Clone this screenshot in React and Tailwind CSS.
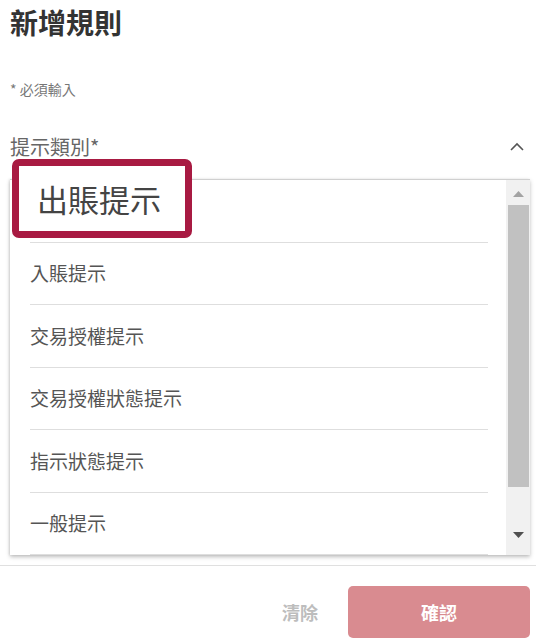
const OPTIONS = ['出賬提示', '入賬提示', '交易授權提示', '交易授權狀態提示', '指示狀態提示', '一般提示']

function ChevronUp() {
  return (
    <svg width="16" height="10" viewBox="0 0 16 10" aria-hidden>
      <path d="M2 8 L8 2 L14 8" fill="none" stroke="#555" strokeWidth="1.6" />
    </svg>
  )
}

function ScrollArrow({ down = false, color }) {
  return (
    <svg width="11" height="6" viewBox="0 0 11 6" aria-hidden>
      <path d={down ? 'M0 0 L11 0 L5.5 6 Z' : 'M0 6 L11 6 L5.5 0 Z'} fill={color} />
    </svg>
  )
}

export default function App() {
  return (
    <div
      className="relative w-[536px] h-[644px] bg-white overflow-hidden flex flex-col"
      style={{ fontFamily: '"Noto Sans CJK TC", "Noto Sans", sans-serif' }}
    >
      {/* Header */}
      <div className="h-[44px] pl-[10px] flex items-center">
        <h1 className="text-[28px] font-bold text-[#333] leading-none">新增規則</h1>
      </div>
      <div className="mt-[38px] h-[14px] pl-[10px] flex items-center text-[14px] text-[#777] leading-none">
        * 必須輸入
      </div>

      {/* Field label */}
      <div className="mt-[40px] h-[22px] pl-[10px] pr-[11px] flex items-center justify-between">
        <span className="text-[20px] text-[#666] leading-none">提示類別*</span>
        <ChevronUp />
      </div>

      <div className="flex-1" />

      {/* Footer */}
      <div className="h-[79px] border-t border-[#e0e0e0] flex items-start justify-end gap-[30px] pt-[20px] pr-[6px]">
        <button type="button" className="h-[52px] text-[18px] font-bold text-[#bdbdbd]">清除</button>
        <button
          type="button"
          className="w-[182px] h-[52px] rounded-[5px] bg-[#d98b90] text-white text-[18px] font-bold"
        >
          確認
        </button>
      </div>

      {/* Dropdown menu — first row sits under the highlight callout */}
      <div className="absolute top-[179px] left-[10px] w-[520px] h-[376px] bg-white border-t border-[#d0d0d0] shadow-[0_2px_4px_rgba(0,0,0,0.25),-1px_0_2px_rgba(0,0,0,0.08)] flex">
        <ul className="flex-1 overflow-hidden">
          {OPTIONS.map((opt, i) => (
            <li
              key={opt}
              className="h-[62.5px] ml-[20px] mr-[18px] border-b border-[#dedede] flex items-center text-[19px] text-[#555]"
            >
              {i === 0 ? null : opt}
            </li>
          ))}
        </ul>
        <div className="w-[24px] bg-[#f1f1f1] flex flex-col items-center">
          <div className="h-[25px] flex items-center justify-center pt-[2px]">
            <ScrollArrow color="#a3a3a3" />
          </div>
          <div className="w-[21px] h-[282px] bg-[#c1c1c1]" />
          <div className="flex-1 flex items-center justify-center pt-[28px]">
            <ScrollArrow down color="#505050" />
          </div>
        </div>
      </div>

      {/* Highlight callout */}
      <div className="absolute top-[159px] left-[12px] w-[180px] h-[79px] border-[7px] border-[#a81a42] rounded-[7px] bg-white flex items-center pl-[18px]">
        <span className="text-[31px] text-[#444] leading-none">{OPTIONS[0]}</span>
      </div>
    </div>
  )
}
